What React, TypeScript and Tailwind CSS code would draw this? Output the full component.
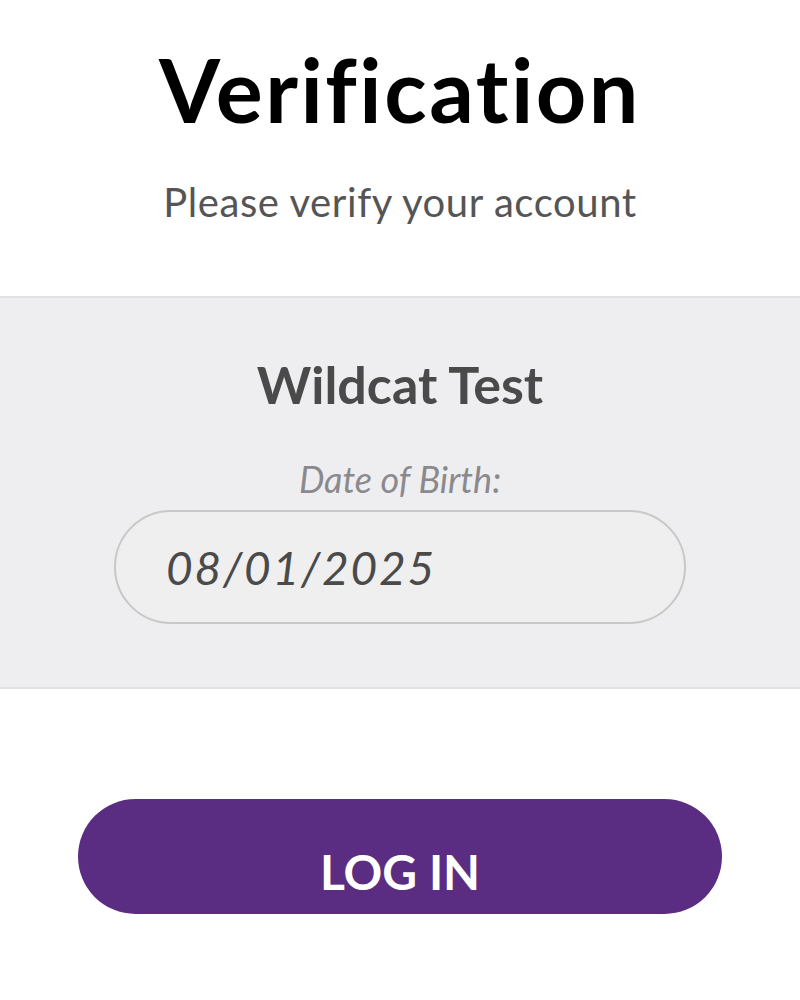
export default function App() {
  return (
    <div className="w-[800px] h-[1000px] bg-white flex flex-col font-['Lato',sans-serif]">
      <div className="flex flex-col items-center pt-[34px] h-[296px]">
        <h1 className="text-[88px] leading-[110px] font-bold text-black tracking-[2.5px]">Verification</h1>
        <p className="mt-[36px] text-[40px] leading-[44px] text-[#555555] tracking-[0.6px]">
          Please verify your account
        </p>
      </div>

      <div className="h-[393px] bg-[#eeeef0] border-y-2 border-[#e2e2e4] flex flex-col items-center pt-[54px]">
        <h2 className="text-[52px] leading-[64px] font-bold text-[#4a4a4a]">Wildcat Test</h2>
        <label className="mt-[43px] text-[36px] leading-[40px] italic text-[#8a8a8e]">Date of Birth:</label>
        <div className="mt-[11px] w-[572px] h-[114px] rounded-full border-2 border-[#c8c8c8] bg-[#efeff0] flex items-center pl-[50px]">
          <span className="text-[46px] italic text-[#4a4a4a] tracking-[1.8px]">08/01/2025</span>
        </div>
      </div>

      <div className="flex justify-center pt-[110px]">
        <button className="w-[644px] h-[115px] rounded-full bg-[#5a2d82] text-white text-[48px] font-bold flex items-center justify-center pt-[30px]">
          LOG IN
        </button>
      </div>
    </div>
  );
}
